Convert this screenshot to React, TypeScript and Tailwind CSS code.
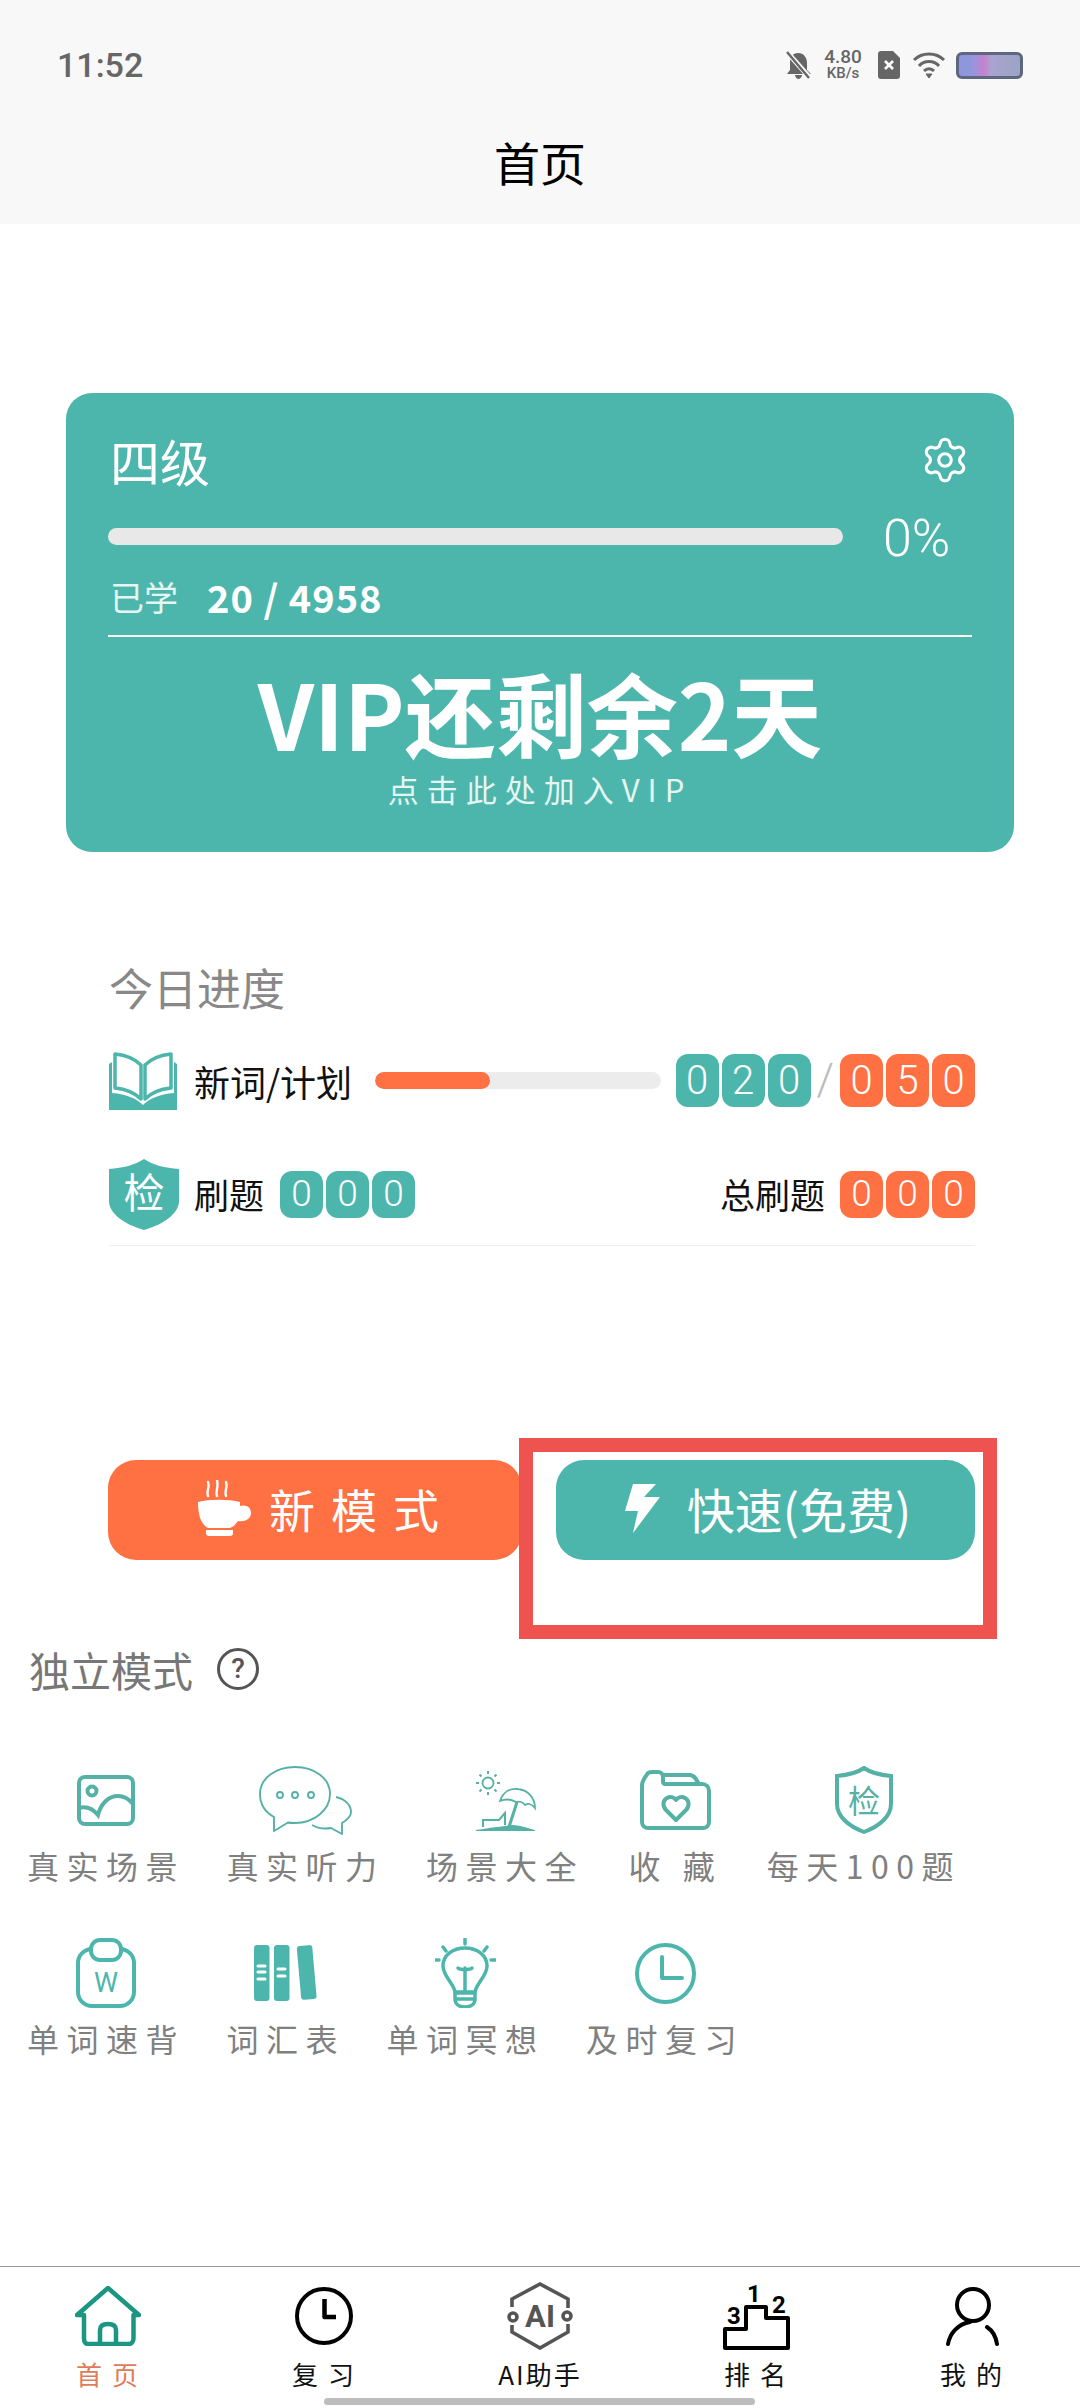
import { Settings } from "lucide-react";

const FONT = "[font-family:'Noto_Sans_CJK_SC','Noto_Sans',sans-serif]";
const SVG_FONT = "'Noto Sans CJK SC', sans-serif";
const TEAL = "#4db6ac";

function Tiles({ value, color, tall }: { value: string; color: string; tall?: boolean }) {
	return (
		<div className="flex gap-[3px]">
			{value.split("").map((digit, i) => (
				<span
					key={i}
					className={`flex w-[43px] items-center justify-center rounded-[12px] font-['Roboto',sans-serif] font-light text-white ${color} ${
						tall ? "h-[53px] text-[40px]" : "h-[47px] text-[37px]"
					}`}
				>
					{digit}
				</span>
			))}
		</div>
	);
}

function BookIcon() {
	return (
		<svg width="68" height="58" viewBox="0 0 68 58" fill="none">
			<path d="M0 12V58H68V12L65 10V41C50 42 40 47 34 53C28 47 18 42 3 41V10Z" fill={TEAL} />
			<path d="M6 2C16 3 26 7 32 13V47C26 41 16 37 6 36Z" stroke={TEAL} strokeWidth="3.5" strokeLinejoin="round" fill="#fff" />
			<path d="M62 2C52 3 42 7 36 13V47C42 41 52 37 62 36Z" stroke={TEAL} strokeWidth="3.5" strokeLinejoin="round" fill="#fff" />
		</svg>
	);
}

function ShieldBadge() {
	return (
		<svg width="70" height="71" viewBox="0 0 70 71">
			<path d="M35 0C44 6 56 9 70 10V42C70 54 56 65 35 71C14 65 0 54 0 42V10C14 9 26 6 35 0Z" fill={TEAL} />
			<text x="35" y="49" textAnchor="middle" fontSize="41" fill="#fff" fontFamily={SVG_FONT}>
				检
			</text>
		</svg>
	);
}

function CoffeeIcon() {
	return (
		<svg width="54" height="56" viewBox="0 0 54 56" fill="none">
			<path d="M11 16C9 11 13 8 11 2M20 16C18 11 22 8 20 0M29 16C27 11 31 8 29 2" stroke="#fff" strokeWidth="2.4" strokeLinecap="round" />
			<path
				d="M1 22C12 19 32 19 43 22V26C49 24 54 27 54 33C54 39 48 42 41 41C38 45 36 47 33 48H11C5 45 1 37 1 22Z"
				fill="#fff"
			/>
			<path d="M9 50H36V53C36 55 35 56 33 56H12C10 56 9 55 9 53Z" fill="#fff" />
		</svg>
	);
}

function BoltIcon() {
	return (
		<svg width="36" height="49" viewBox="0 0 36 49">
			<path d="M8 0H31L19 13H35L8 49L13 27H0Z" fill="#fff" />
		</svg>
	);
}

function PictureIcon() {
	return (
		<svg width="58" height="51" viewBox="0 0 58 51" fill="none" stroke="#55b0a5" strokeWidth="4">
			<rect x="2" y="2" width="54" height="47" rx="6" />
			<circle cx="15" cy="16" r="4.5" />
			<path d="M2 33C9 31 16 34 21 40C24 28 32 21 41 21C47 21 52 24 56 29" />
		</svg>
	);
}

function ChatIcon() {
	return (
		<svg width="93" height="69" viewBox="0 0 93 69" fill="none" stroke="#55b0a5" strokeWidth="1.9" strokeLinejoin="round">
			<path d="M15 51C6 46 1 38 1 28C1 12 17 1 36 1C55 1 71 12 71 28C71 44 55 57 36 57C33 57 31 57 29 56.5L15 65Z" />
			<circle cx="21" cy="29" r="3" />
			<circle cx="36" cy="29" r="3" />
			<circle cx="52" cy="29" r="3" />
			<path d="M77 31C86 33 92 39 92 46C92 50 88 54 83 57L83 68L72 62C66 63 58 62 53 59" />
		</svg>
	);
}

function BeachIcon() {
	return (
		<svg width="62" height="62" viewBox="0 0 62 62" fill="none" stroke="#55b0a5" strokeWidth="1.8">
			<circle cx="14" cy="14" r="5.5" />
			<path d="M14 2V5M14 23V26M2 14H5M23 14H26M5.5 5.5L7.5 7.5M20.5 20.5L22.5 22.5M22.5 5.5L20.5 7.5M7.5 20.5L5.5 22.5" strokeWidth="2" />
			<path d="M26 32C29 23 36 19 44 20C54 21 61 29 61 39C58 35 54 34 51 36C49 33 45 32 42 33C37 30 31 30 26 32Z" />
			<path d="M43 33L35 58" strokeWidth="3" />
			<path d="M2 62C10 60 30 58 38 57C46 57 54 60 61 62Z" fill="#55b0a5" />
			<path d="M9 58V51H25L31 44V56" strokeWidth="2" />
		</svg>
	);
}

function FolderIcon() {
	return (
		<svg width="71" height="60" viewBox="0 0 71 60" fill="none" stroke="#55b0a5" strokeWidth="4" strokeLinejoin="round">
			<path d="M2 15C2 11 5 7 8 3C9 2 10 2 12 2H18C21 2 23 4 23 7V12C23 13 24 14 25 14H62C66 14 69 17 69 21V52C69 56 66 58 63 58H8C5 58 2 56 2 52Z" />
			<path d="M23 5H50C54 5 56 9 59 14" />
			<path d="M36 50L26 40C22 36 23 30 27 28C30 26 34 27 36 30C38 27 42 26 45 28C49 30 50 36 46 40Z" />
		</svg>
	);
}

function ShieldOutlineIcon() {
	return (
		<svg width="58" height="68" viewBox="0 0 58 68" fill="none">
			<path
				d="M29 2C36 7 45 9 56 10V38C56 50 45 60 29 66C13 60 2 50 2 38V10C13 9 22 7 29 2Z"
				stroke="#55b0a5"
				strokeWidth="4"
			/>
			<text x="29" y="47" textAnchor="middle" fontSize="32" fill="#55b0a5" fontFamily={SVG_FONT}>
				检
			</text>
		</svg>
	);
}

function ClipboardIcon() {
	return (
		<svg width="60" height="70" viewBox="0 0 60 70" fill="none" stroke={TEAL} strokeWidth="4">
			<rect x="2" y="11" width="56" height="57" rx="14" />
			<rect x="15" y="2" width="30" height="20" rx="9" fill="#fff" />
			<text x="30" y="54" textAnchor="middle" fontSize="27" fill={TEAL} stroke="none" fontFamily="'Roboto', sans-serif">
				W
			</text>
		</svg>
	);
}

function BooksIcon() {
	return (
		<svg width="64" height="56" viewBox="0 0 64 56">
			<rect x="0" y="0" width="15.5" height="56" rx="3" fill={TEAL} />
			<rect x="20" y="0" width="15.5" height="56" rx="3" fill={TEAL} />
			<rect x="45" y="0.5" width="15.5" height="54" rx="3" fill={TEAL} transform="rotate(-5 52 28)" />
			<path d="M4 21H11M4 27H11M4 34H11M24 24H31M24 31H31" stroke="#fff" strokeWidth="3" strokeLinecap="round" />
		</svg>
	);
}

function BulbIcon() {
	return (
		<svg width="61" height="70" viewBox="0 0 61 70" fill="none" stroke={TEAL} strokeWidth="3.5" strokeLinecap="round">
			<path d="M30 1V6M8 9L11 13M52 9L49 13M1 22H4M56 22H60" />
			<path d="M20 54C19 46 8 38 8 28C8 17 18 10 30 10C42 10 52 17 52 28C52 38 41 46 40 54Z" />
			<path d="M30 54V30M23 30C25 32 35 32 37 30" />
			<path d="M20 55H40V61C40 66 36 69 30 69C24 69 20 66 20 61Z" />
			<path d="M21 61H39" />
		</svg>
	);
}

function ClockIcon() {
	return (
		<svg width="61" height="61" viewBox="0 0 61 61" fill="none" stroke={TEAL} strokeWidth="4" strokeLinecap="round" strokeLinejoin="round">
			<circle cx="30.5" cy="30.5" r="28.5" />
			<path d="M27 14V35H47" />
		</svg>
	);
}

function HomeIcon() {
	return (
		<svg width="66" height="60" viewBox="0 0 66 60" fill="none" stroke="#1a9683" strokeWidth="4.5" strokeLinejoin="round" strokeLinecap="round">
			<path d="M2 29L33 2L64 29H58.5V52C58.5 55 57 58 54 58H13C10 58 9 55 9 52V29Z" />
			<path d="M25 58V44C25 40 28 38 33 38C38 38 41 40 41 44V58" />
		</svg>
	);
}

function ReviewIcon() {
	return (
		<svg width="58" height="58" viewBox="0 0 58 58" fill="none" stroke="#000" strokeWidth="4" strokeLinejoin="round">
			<circle cx="29" cy="29" r="27" />
			<path d="M29.5 12V30H41" strokeWidth="4.5" />
		</svg>
	);
}

function AiIcon() {
	return (
		<svg width="66" height="68" viewBox="0 0 66 68" fill="none" stroke="#555" strokeWidth="3.6">
			<path d="M5 25V17L33 2L61 17V26" />
			<path d="M61 42V50L33 66L5 50V43" />
			<circle cx="6" cy="35" r="4" />
			<circle cx="60" cy="34" r="4" />
			<text x="33" y="45" textAnchor="middle" fontSize="31" fontWeight="700" fill="#555" stroke="none" fontFamily="'Roboto', sans-serif">
				AI
			</text>
		</svg>
	);
}

function RankIcon() {
	return (
		<svg width="67" height="68" viewBox="0 0 67 68" fill="none">
			<path d="M2 66V47H23V25H43V36H65V66Z" stroke="#000" strokeWidth="4" strokeLinejoin="round" />
			<g fill="#000" fontFamily="'Roboto', sans-serif" fontWeight="700" fontSize="24" textAnchor="middle">
				<text x="31" y="20">1</text>
				<text x="56" y="31">2</text>
				<text x="11" y="42">3</text>
			</g>
		</svg>
	);
}

function UserIcon() {
	return (
		<svg width="53" height="59" viewBox="0 0 53 59" fill="none" stroke="#000" strokeWidth="4" strokeLinecap="round">
			<circle cx="27" cy="18" r="16" />
			<path d="M2 57C4 46 12 37 24 35" />
			<path d="M41 40C47 44 50 50 51 57" />
		</svg>
	);
}

const ROW_ONE = [
	{ label: "真实场景", icon: <PictureIcon /> },
	{ label: "真实听力", icon: <ChatIcon /> },
	{ label: "场景大全", icon: <BeachIcon /> },
	{ label: "收 藏", icon: <FolderIcon />, wide: true },
	{ label: "每天100题", icon: <ShieldOutlineIcon /> },
];

const ROW_TWO = [
	{ label: "单词速背", icon: <ClipboardIcon /> },
	{ label: "词汇表", icon: <BooksIcon /> },
	{ label: "单词冥想", icon: <BulbIcon /> },
	{ label: "及时复习", icon: <ClockIcon /> },
];

const NAV = [
	{ label: "首 页", icon: <HomeIcon />, active: true },
	{ label: "复 习", icon: <ReviewIcon /> },
	{ label: "AI助手", icon: <AiIcon /> },
	{ label: "排 名", icon: <RankIcon /> },
	{ label: "我 的", icon: <UserIcon /> },
];

function ModeItem({ label, icon, wide }: { label: string; icon: React.ReactNode; wide?: boolean }) {
	return (
		<div className={`flex flex-col items-center ${wide ? "px-[3px]" : ""}`}>
			<div className="flex h-[70px] items-center justify-center">{icon}</div>
			<span className="mt-[13px] whitespace-pre text-[32px] leading-[34px] tracking-[7.5px] text-[#808080]">{label}</span>
		</div>
	);
}

export default function App() {
	return (
		<div className={`relative flex h-[2408px] w-[1080px] flex-col overflow-hidden bg-white ${FONT}`}>
			<header className="h-[224px] shrink-0 bg-[#f8f8f8] pt-[50px]">
				<div className="flex h-[30px] items-center justify-between px-[57px]">
					<span className="font-['Roboto',sans-serif] text-[34px] font-medium leading-[30px] text-[#666]">11:52</span>
					<div className="flex items-center">
						<svg width="27" height="28" viewBox="0 0 27 28">
							<path d="M13 2C19 2 22 7 22 12V19L26 23H2L5 19V11C5 6 8 2 13 2ZM10 24H17C17 26 15 28 13.5 28C12 28 10 26 10 24Z" fill="#666" />
							<path d="M2 1L25 27" stroke="#f8f8f8" strokeWidth="5" />
							<path d="M2 1L24 27" stroke="#666" strokeWidth="2.4" />
						</svg>
						<div className="ml-[8px] flex w-[46px] flex-col items-center font-['Roboto',sans-serif] font-medium text-[#666]">
							<span className="text-[19px] leading-[17px]">4.80</span>
							<span className="text-[15px] leading-[17px]">KB/s</span>
						</div>
						<svg className="ml-[12px]" width="22" height="28" viewBox="0 0 22 28">
							<path d="M3 0H15L22 7V25C22 27 21 28 19 28H3C1 28 0 27 0 25V3C0 1 1 0 3 0Z" fill="#666" />
							<path d="M7 10L15 18M15 10L7 18" stroke="#fff" strokeWidth="2.6" />
						</svg>
						<svg className="ml-[12px]" width="34" height="28" viewBox="0 0 34 28" fill="none" stroke="#666" strokeWidth="3">
							<path d="M2 9C10 1 24 1 32 9" />
							<path d="M7 15C12 9 22 9 27 15" />
							<path d="M12 20C15 17 19 17 22 20" />
							<path d="M14 23H20L17 27Z" fill="#666" strokeWidth="1" />
						</svg>
						<div className="ml-[10px] h-[27px] w-[67px] rounded-[6px] border-[3px] border-[#5f6680] bg-[linear-gradient(90deg,#8e96dc_0%,#8e96dc_18%,#a48fd8_28%,#c582cf_42%,#a9a3cf_52%,#9ba4c4_100%)]" />
					</div>
				</div>
				<h1 className="mt-[58px] text-center text-[46px] font-normal leading-[46px] text-black">首页</h1>
			</header>

			<section className="mx-[66px] mt-[169px] rounded-[26px] bg-[#4db6ac] px-[42px] pb-[48px] pt-[42px] text-white">
				<div className="flex items-center justify-between pr-[2px]">
					<span className="pl-[2px] text-[50px] leading-[48px]">四级</span>
					<Settings size={50} strokeWidth={1.5} />
				</div>
				<div className="mt-[34px] flex h-[34px] items-center">
					<div className="h-[17px] w-[735px] rounded-full bg-[#e8e8e8]" />
					<span className="ml-[40px] pt-[5px] font-['Roboto',sans-serif] text-[52px] font-light leading-[34px]">0%</span>
				</div>
				<div className="mt-[27px] flex h-[34px] items-center pl-[2px]">
					<span className="text-[34px] leading-[34px] text-[#e4f5f2]">已学</span>
					<span className="ml-[29px] text-[38px] font-bold leading-[34px] tracking-[1px]">20 / 4958</span>
				</div>
				<div className="mt-[21px] h-[1.5px] bg-white" />
				<div className="mt-[28px] text-center text-[91px] font-bold leading-[92px]">VIP还剩余2天</div>
				<div className="mt-[17px] text-center text-[31px] leading-[30px] tracking-[8px] text-[#e4f5f2]">点击此处加入VIP</div>
			</section>

			<section className="mx-[109px] mt-[113px] w-[866px]">
				<h2 className="text-[44px] font-normal leading-[44px] text-[#888]">今日进度</h2>
				<div className="mt-[43px] flex h-[58px] items-center">
					<BookIcon />
					<span className="ml-[17px] w-[181px] text-[36px] leading-[40px] text-[#111]">新词/计划</span>
					<div className="h-[17px] w-[286px] overflow-hidden rounded-full bg-[#ececec]">
						<div className="h-full w-[115px] rounded-full bg-[#ff7043]" />
					</div>
					<div className="ml-auto flex items-center">
						<Tiles value="020" color="bg-[#4db6ac]" tall />
						<span className="mx-[6px] font-['Roboto',sans-serif] text-[44px] font-light leading-[53px] text-[#bbb]">/</span>
						<Tiles value="050" color="bg-[#ff7043]" tall />
					</div>
				</div>
				<div className="mt-[49px] flex h-[71px] items-center">
					<ShieldBadge />
					<span className="ml-[15px] text-[35px] leading-[40px] text-[#111]">刷题</span>
					<div className="ml-[16px]">
						<Tiles value="000" color="bg-[#4db6ac]" />
					</div>
					<span className="ml-auto text-[35px] leading-[40px] text-[#111]">总刷题</span>
					<div className="ml-[15px]">
						<Tiles value="000" color="bg-[#ff7043]" />
					</div>
				</div>
				<div className="mt-[15px] h-[1.5px] bg-[#eeeeee]" />
			</section>

			<section className="mt-[214px] flex pl-[108px]">
				<button type="button" className="flex h-[100px] w-[414px] items-center justify-center gap-[18px] rounded-[28px] bg-[#ff7043] pb-[4px] pl-[22px] text-[46px] tracking-[16px] text-white">
					<CoffeeIcon />
					<span>新模式</span>
				</button>
				<button type="button" className="ml-[34px] flex h-[100px] w-[419px] items-center justify-center gap-[26px] rounded-[28px] bg-[#4db6ac] pb-[4px] pl-[5px] text-[48px] text-white">
					<BoltIcon />
					<span>快速(免费)</span>
				</button>
			</section>

			<div className="absolute left-[519px] top-[1438px] h-[201px] w-[478px] border-[14px] border-[#ef5350]" />

			<section className="mt-[87px] pl-[27px]">
				<div className="flex items-center pl-[2px]">
					<span className="text-[41px] leading-[44px] text-[#777]">独立模式</span>
					<span className="ml-[24px] flex size-[42px] items-center justify-center rounded-full border-[3px] border-[#555] font-['Roboto',sans-serif] text-[28px] font-medium text-[#555]">
						?
					</span>
				</div>
				<div className="mt-[74px] flex gap-x-[41.5px]">
					{ROW_ONE.map((item) => (
						<ModeItem key={item.label} {...item} />
					))}
				</div>
				<div className="mt-[56px] flex gap-x-[41.5px]">
					{ROW_TWO.map((item) => (
						<ModeItem key={item.label} {...item} />
					))}
				</div>
			</section>

			<nav className="mt-auto grid h-[142px] shrink-0 grid-cols-5 border-t-[1.5px] border-[#999] pt-[15px]">
				{NAV.map((item) => (
					<div key={item.label} className="flex flex-col items-center">
						<div className="flex h-[68px] items-center justify-center">{item.icon}</div>
						<span className={`mt-[11px] whitespace-pre text-[26px] leading-[26px] tracking-[2px] ${item.active ? "text-[#e07b5a]" : "text-[#111]"}`}>
							{item.label}
						</span>
					</div>
				))}
			</nav>

			<div className="absolute bottom-[3px] left-[324px] h-[7px] w-[431px] rounded-full bg-[#bdbdbd]" />
		</div>
	);
}
